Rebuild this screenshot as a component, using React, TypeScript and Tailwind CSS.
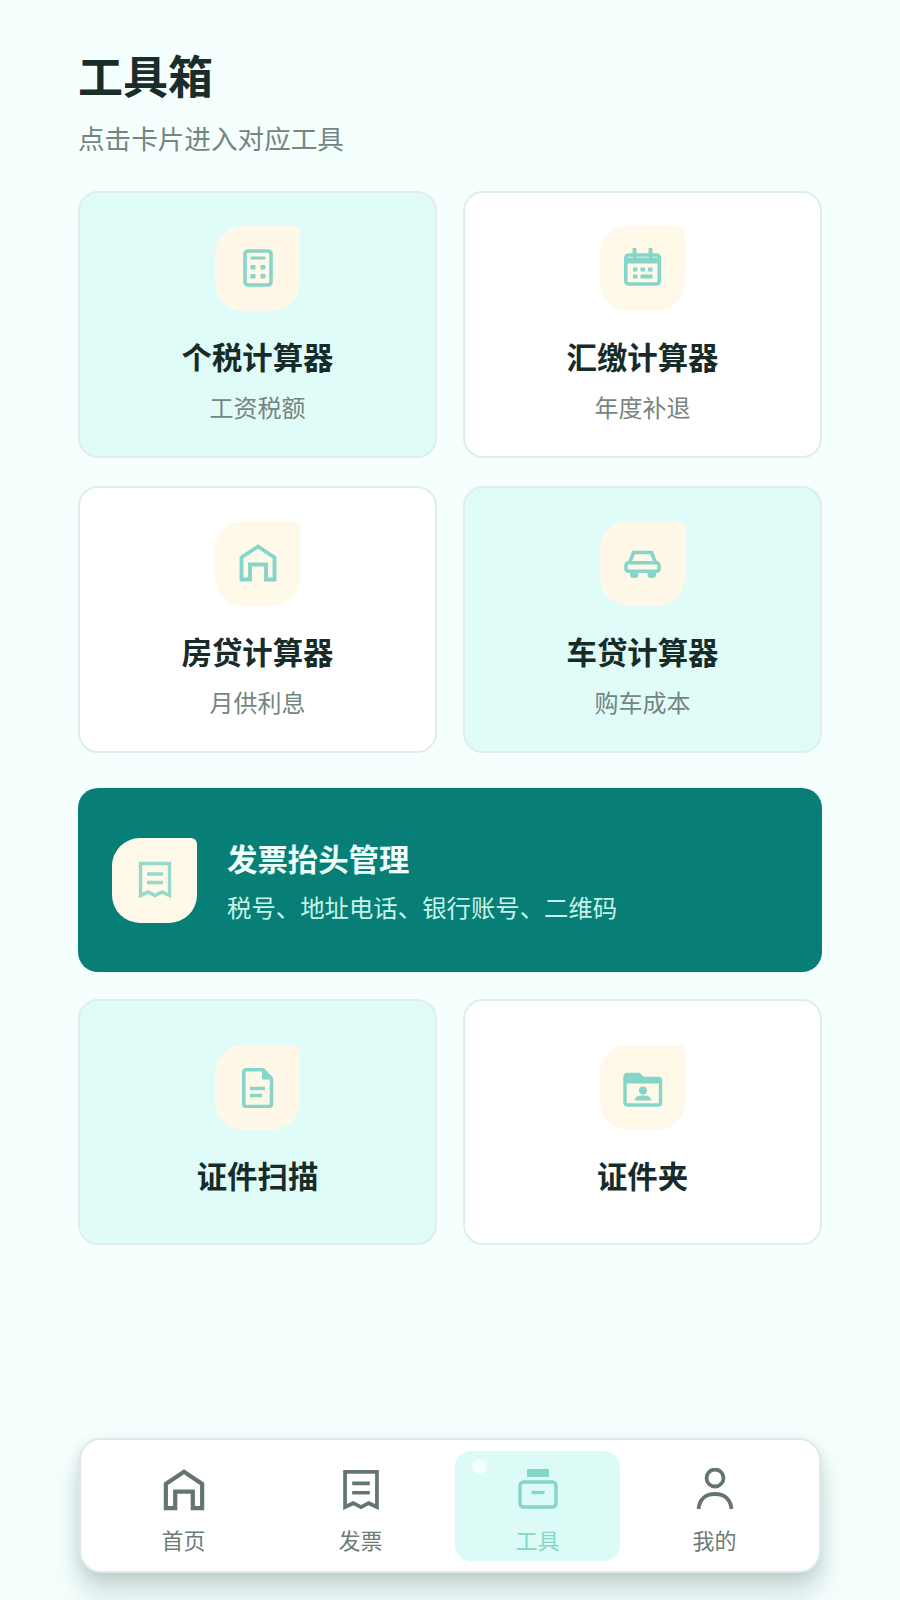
import React from "react";

const FONT = '"Noto Sans CJK SC", "Noto Sans", sans-serif';
const ACC = "#85d6c9";

function CalcIcon() {
  return (
    <svg width="40" height="40" viewBox="0 0 40 40" fill="none">
      <rect x="7" y="3" width="26" height="34" rx="3" stroke={ACC} strokeWidth="3.6" />
      <path d="M12.500 10h15" stroke={ACC} strokeWidth="3" />
      <g fill={ACC}>
        <rect x="12.500" y="17" width="5" height="4.500" rx="1" />
        <rect x="22.500" y="17" width="5" height="4.500" rx="1" />
        <rect x="12.500" y="26" width="5" height="4.500" rx="1" />
        <rect x="22.500" y="26" width="5" height="4.500" rx="1" />
      </g>
    </svg>
  );
}
function CalendarIcon() {
  return (
    <svg width="40" height="40" viewBox="0 0 40 40" fill="none">
      <rect x="2.800" y="7" width="33.500" height="29" rx="3" stroke={ACC} strokeWidth="3.600" />
      <path d="M2 12.500h35" stroke={ACC} strokeWidth="6" />
      <path d="M11.500 1.500v7M27.500 1.500v7" stroke={ACC} strokeWidth="4" strokeLinecap="round" />
      <g fill={ACC}>
        <rect x="10" y="19.500" width="4.500" height="4" />
        <rect x="17.500" y="19.500" width="4.500" height="4" />
        <rect x="25" y="19.500" width="4.500" height="4" />
        <rect x="10" y="26.500" width="4.500" height="4" />
        <rect x="17.500" y="26.500" width="12" height="4" />
      </g>
    </svg>
  );
}
function HouseIcon({ size = 40, color = ACC }: { size?: number; color?: string }) {
  return (
    <svg width={size} height={size} viewBox="0 0 40 40" fill="none">
      <path d="M3.500 36.500V14.500L20 3.500l16.500 11V36.500H28V21.500H12V36.500Z" stroke={color} strokeWidth="3.800" strokeLinejoin="miter" />
    </svg>
  );
}
function CarIcon() {
  return (
    <svg width="40" height="40" viewBox="0 0 40 40" fill="none">
      <path d="M6.500 20L10.500 9.500H28.500L32.500 20" stroke={ACC} strokeWidth="3.600" strokeLinejoin="round" />
      <rect x="3" y="19.750" width="33" height="8.500" rx="2.500" stroke={ACC} strokeWidth="3.600" />
      <rect x="7" y="28" width="8.500" height="7" rx="3.500" fill={ACC} />
      <rect x="24.500" y="28" width="8.500" height="7" rx="3.500" fill={ACC} />
    </svg>
  );
}
function ReceiptIcon({ size = 40, color = ACC, sw = 3.400 }: { size?: number; color?: string; sw?: number }) {
  return (
    <svg width={size} height={size} viewBox="0 0 40 40" fill="none">
      <path d="M5.500 3.500H34.500V35.500L27 32L20 35.500L13 32L5.500 35.500Z" stroke={color} strokeWidth={sw} strokeLinejoin="miter" />
      <path d="M12 14h16M12 22.500h16" stroke={color} strokeWidth={sw} />
    </svg>
  );
}
function DocIcon() {
  return (
    <svg width="40" height="40" viewBox="0 0 40 40" fill="none">
      <path d="M7.500 1.800H25L33.500 10.500V36a2.500 2.500 0 0 1-2.500 2.500H8A2.500 2.500 0 0 1 5.800 36V4A2.500 2.500 0 0 1 7.500 1.800Z" stroke={ACC} strokeWidth="3.600" strokeLinejoin="round" />
      <path d="M24 2.500L33 11.500H24Z" fill={ACC} />
      <path d="M12 20.500h15M12 27.500h12" stroke={ACC} strokeWidth="3.600" />
    </svg>
  );
}
function FolderIcon() {
  return (
    <svg width="40" height="40" viewBox="0 0 40 40" fill="none">
      <path d="M2 8.500a2 2 0 0 1 2-2h12l4 4h15.500a2 2 0 0 1 2 2V35a2 2 0 0 1-2 2H4a2 2 0 0 1-2-2Z" stroke={ACC} strokeWidth="3.400" strokeLinejoin="round" />
      <path d="M3 7h13l3.500 5H37v3.500H3Z" fill={ACC} />
      <circle cx="20" cy="22.500" r="4" fill={ACC} />
      <path d="M11.500 32.500c.5-3.500 3-5 8.500-5s8 1.500 8.500 5Z" fill={ACC} />
    </svg>
  );
}
function ToolsIcon({ color }: { color: string }) {
  return (
    <svg width="44" height="44" viewBox="0 0 44 44" fill="none">
      <rect x="11" y="1" width="22" height="8" rx="1" fill={color} />
      <rect x="4" y="14" width="36" height="25" rx="3.500" stroke={color} strokeWidth="3.400" />
      <path d="M15.500 24.500h13" stroke={color} strokeWidth="3.400" />
    </svg>
  );
}
function PersonIcon({ color }: { color: string }) {
  return (
    <svg width="44" height="44" viewBox="0 0 44 44" fill="none">
      <circle cx="22" cy="10" r="8.500" stroke={color} strokeWidth="3.800" />
      <path d="M5.500 41C6.500 31 13 26 22 26S37.500 31 38.500 41" stroke={color} strokeWidth="3.800" />
    </svg>
  );
}

function Tile({ children, light }: { children: React.ReactNode; light?: boolean }) {
  return (
    <div
      className={`flex h-[85px] w-[85px] shrink-0 items-center justify-center rounded-[28px] rounded-tr-[6px] ${
        light ? "bg-[#fff9e9]" : "bg-[#fff7e7]"
      }`}
    >
      {children}
    </div>
  );
}

function Card({
  tinted,
  icon,
  title,
  sub,
}: {
  tinted?: boolean;
  icon: React.ReactNode;
  title: string;
  sub?: string;
}) {
  return (
    <div
      className={`flex flex-col items-center justify-center rounded-[20px] border-2 border-[#dfeeec] ${
        sub ? "h-[267px]" : "h-[246px] pb-[4px]"
      } ${tinted ? "bg-[#e0fcf8]" : "bg-white"}`}
    >
      <Tile light={!tinted}>{icon}</Tile>
      <div className="mt-[25px] text-[30.400px] leading-[40px] font-semibold text-[#172b28]">{title}</div>
      {sub && <div className="mt-[14px] text-[24px] leading-[34px] text-[#75857f]">{sub}</div>}
    </div>
  );
}

function NavItem({
  icon,
  label,
  active,
}: {
  icon: React.ReactNode;
  label: string;
  active?: boolean;
}) {
  return (
    <div className="flex w-[177px] justify-center">
      <div
        className={`relative flex h-[110px] w-[165px] flex-col items-center rounded-[16px] pt-[17px] ${
          active ? "bg-[#dcfaf6]" : ""
        }`}
      >
        {active && <div className="absolute left-[17px] top-[8px] h-[15px] w-[15px] rounded-full bg-[#f3fffd]" />}
        <div className="flex h-[44px] w-[44px] items-center justify-center">{icon}</div>
        <div
          className={`mt-[12px] text-[22px] leading-[30px] ${active ? "text-[#85d6c9]" : "text-[#6c7b78]"}`}
        >
          {label}
        </div>
      </div>
    </div>
  );
}

export default function App() {
  const grey = "#637572";
  return (
    <div
      className="flex min-h-[1600px] w-[900px] flex-col bg-[#f5fffe] px-[78px] pt-[47px] pb-[27px]"
      style={{ fontFamily: FONT }}
    >
      <h1 className="text-[45px] leading-[56px] font-bold text-[#1a2d2a]">工具箱</h1>
      <p className="mt-[17px] mb-[35px] text-[26.600px] leading-[36px] text-[#75857f]">点击卡片进入对应工具</p>

      <div className="grid grid-cols-2 gap-x-[26px] gap-y-[28px]">
        <Card tinted icon={<CalcIcon />} title="个税计算器" sub="工资税额" />
        <Card icon={<CalendarIcon />} title="汇缴计算器" sub="年度补退" />
        <Card icon={<HouseIcon />} title="房贷计算器" sub="月供利息" />
        <Card tinted icon={<CarIcon />} title="车贷计算器" sub="购车成本" />
      </div>

      <div className="mt-[35px] mb-[27px] flex h-[184px] items-center gap-[30px] rounded-[20px] bg-[#087f76] px-[34px]">
        <Tile light>
          <ReceiptIcon size={40} color="#96d8c9" sw={3.400} />
        </Tile>
        <div>
          <div className="text-[30.400px] leading-[42px] font-semibold text-[#effffb]">发票抬头管理</div>
          <div className="mt-[11px] text-[24.400px] leading-[34px] text-[#c8f3ea]">税号、地址电话、银行账号、二维码</div>
        </div>
      </div>

      <div className="grid grid-cols-2 gap-x-[26px]">
        <Card tinted icon={<DocIcon />} title="证件扫描" />
        <Card icon={<FolderIcon />} title="证件夹" />
      </div>

      <nav className="mx-px mt-auto flex h-[135px] items-start rounded-[22px] border-2 border-[#dfe9e7] bg-white px-[14px] pt-[11px] shadow-[0_20px_28px_rgba(70,105,100,0.24),0_4px_12px_rgba(70,105,100,0.14)]">
        <NavItem icon={<HouseIcon size={44} color={grey} />} label="首页" />
        <NavItem icon={<ReceiptIcon size={44} color={grey} sw={3.400} />} label="发票" />
        <NavItem active icon={<ToolsIcon color={ACC} />} label="工具" />
        <NavItem icon={<PersonIcon color={grey} />} label="我的" />
      </nav>
    </div>
  );
}
